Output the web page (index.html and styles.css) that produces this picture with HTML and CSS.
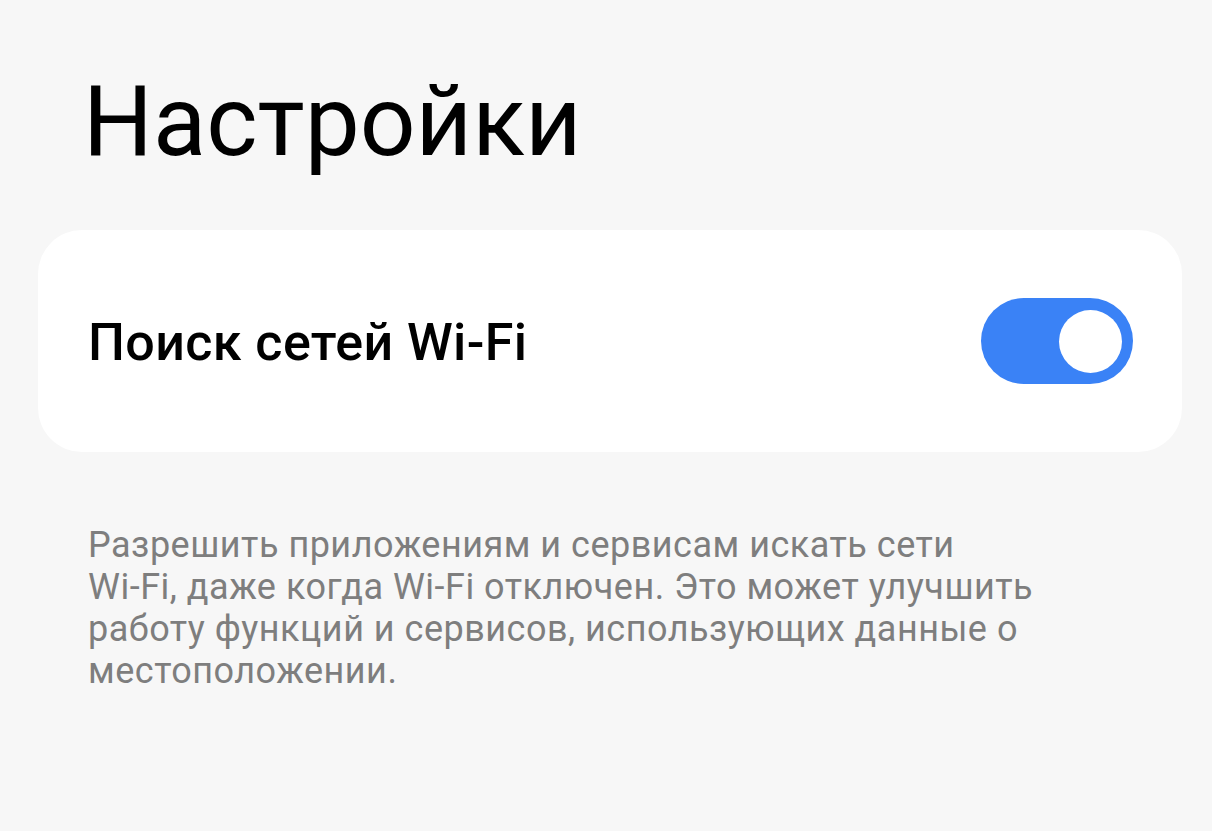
FILE: index.html
```html
<!DOCTYPE html>
<html lang="ru">
<head>
    <meta charset="UTF-8">
    <meta name="viewport" content="width=device-width, initial-scale=1.0">
    <title>Настройки</title>
    <link rel="stylesheet" href="styles.css">
</head>
<body>
    <div class="page">
        <h1 class="title">Настройки</h1>
        <div class="card">
            <span class="card-label">Поиск сетей Wi-Fi</span>
            <div class="switch switch-on">
                <div class="switch-knob"></div>
            </div>
        </div>
        <p class="hint">Разрешить приложениям и сервисам искать сети <span class="nowrap">Wi-Fi,</span> даже когда <span class="nowrap">Wi-Fi</span> отключен. Это может улучшить работу функций и сервисов, использующих данные о местоположении.</p>
    </div>
</body>
</html>
```

FILE: styles.css
```css
body {
    margin: 0;
    background-color: #f7f7f7;
    font-family: Roboto, "Noto Sans", sans-serif;
}
.page {
    padding: 0 30px 0 38px;
}
.title {
    margin: 0;
    padding: 64px 0 0 45px;
    font-size: 98px;
    font-weight: 400;
    line-height: 116px;
    color: #000;
}
.card {
    margin-top: 50px;
    height: 222px;
    background-color: #fff;
    border-radius: 44px;
    display: flex;
    align-items: center;
    justify-content: space-between;
    padding: 0 49px 0 50px;
}
.card-label {
    font-size: 52px;
    font-weight: 500;
    letter-spacing: 0.4px;
    color: #000;
    margin-top: 2px;
}
.switch {
    width: 152px;
    height: 86px;
    border-radius: 43px;
    background-color: #3a82f6;
    display: flex;
    align-items: center;
    justify-content: flex-end;
    padding: 0 11px;
    box-sizing: border-box;
}
.switch-knob {
    width: 63px;
    height: 63px;
    border-radius: 50%;
    background-color: #fff;
}
.hint {
    margin: 72px 0 0 50px;
    width: 958px;
    font-size: 36px;
    line-height: 42px;
    letter-spacing: 0.5px;
    color: #7e7e7e;
}
/* keep "Wi-Fi" from breaking at the hyphen */
.nowrap {
    display: inline-block;
    white-space: nowrap;
}
```
